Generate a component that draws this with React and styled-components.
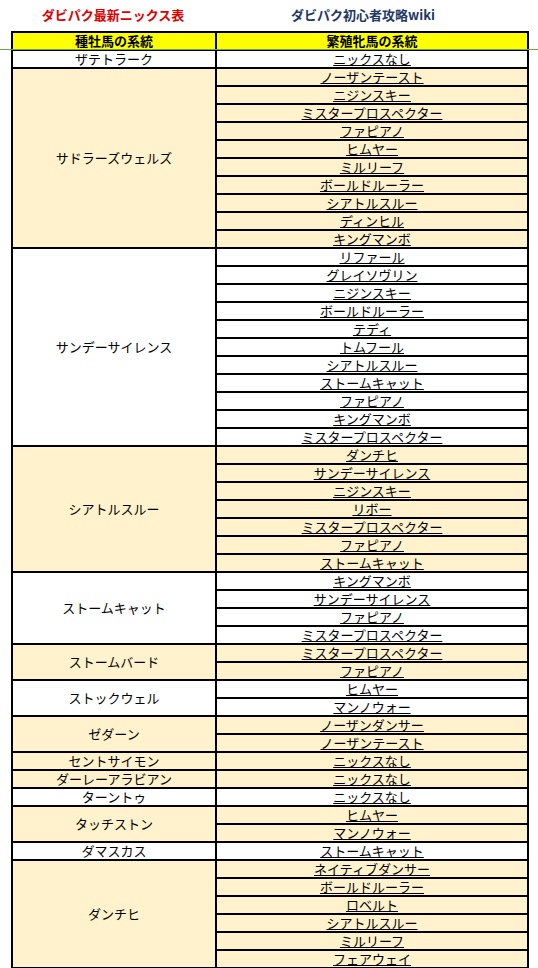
import React from "react";
import styled, { createGlobalStyle } from "styled-components";

const groups = [
  { sire: "ザテトラーク", cream: false, mares: ["ニックスなし"] },
  {
    sire: "サドラーズウェルズ",
    cream: true,
    mares: [
      "ノーザンテースト",
      "ニジンスキー",
      "ミスタープロスペクター",
      "ファピアノ",
      "ヒムヤー",
      "ミルリーフ",
      "ボールドルーラー",
      "シアトルスルー",
      "ディンヒル",
      "キングマンボ",
    ],
  },
  {
    sire: "サンデーサイレンス",
    cream: false,
    mares: [
      "リファール",
      "グレイソヴリン",
      "ニジンスキー",
      "ボールドルーラー",
      "テディ",
      "トムフール",
      "シアトルスルー",
      "ストームキャット",
      "ファピアノ",
      "キングマンボ",
      "ミスタープロスペクター",
    ],
  },
  {
    sire: "シアトルスルー",
    cream: true,
    mares: [
      "ダンチヒ",
      "サンデーサイレンス",
      "ニジンスキー",
      "リボー",
      "ミスタープロスペクター",
      "ファピアノ",
      "ストームキャット",
    ],
  },
  {
    sire: "ストームキャット",
    cream: false,
    mares: ["キングマンボ", "サンデーサイレンス", "ファピアノ", "ミスタープロスペクター"],
  },
  { sire: "ストームバード", cream: true, mares: ["ミスタープロスペクター", "ファピアノ"] },
  { sire: "ストックウェル", cream: false, mares: ["ヒムヤー", "マンノウォー"] },
  { sire: "ゼダーン", cream: true, mares: ["ノーザンダンサー", "ノーザンテースト"] },
  { sire: "セントサイモン", cream: true, mares: ["ニックスなし"] },
  { sire: "ダーレーアラビアン", cream: true, mares: ["ニックスなし"] },
  { sire: "ターントゥ", cream: false, mares: ["ニックスなし"] },
  { sire: "タッチストン", cream: true, mares: ["ヒムヤー", "マンノウォー"] },
  { sire: "ダマスカス", cream: false, mares: ["ストームキャット"] },
  {
    sire: "ダンチヒ",
    cream: true,
    mares: [
      "ネイティブダンサー",
      "ボールドルーラー",
      "ロベルト",
      "シアトルスルー",
      "ミルリーフ",
      "フェアウェイ",
    ],
  },
];

const App = () => {
  return (
    <Page>
      <GlobalStyle />
      <TitleBar>
        <Title color="#e00000">ダビパク最新ニックス表</Title>
        <Title color="#1f3864">ダビパク初心者攻略wiki</Title>
      </TitleBar>
      <Sheet>
        <colgroup>
          <col style={{ width: 204 }} />
          <col style={{ width: 312 }} />
        </colgroup>
        <thead>
          <tr>
            <HeadCell>種牡馬の系統</HeadCell>
            <HeadCell>繁殖牝馬の系統</HeadCell>
          </tr>
        </thead>
        <tbody>
          {groups.map((g) =>
            g.mares.map((m, i) => (
              <tr key={g.sire + i}>
                {i === 0 && (
                  <SireCell rowSpan={g.mares.length} cream={g.cream ? 1 : 0}>
                    {g.sire}
                  </SireCell>
                )}
                <MareCell cream={g.cream ? 1 : 0}>{m}</MareCell>
              </tr>
            ))
          )}
        </tbody>
      </Sheet>
      <FreezeLine />
    </Page>
  );
};

const GlobalStyle = createGlobalStyle`
  body {
    margin: 0;
    background: #fff;
    font-family: "Noto Sans CJK JP", "Noto Sans", sans-serif;
  }
`;

const Page = styled.div`
  position: relative;
  width: 538px;
  height: 968px;
  overflow: hidden;
`;

const TitleBar = styled.div`
  display: grid;
  grid-template-columns: 204px 296px;
  padding-left: 11px;
  height: 31px;
  align-items: center;
`;

const Title = styled.div`
  text-align: center;
  font-size: 13px;
  font-weight: 700;
  color: ${(p) => p.color};
  line-height: 1;
  padding-bottom: 2px;
`;

const Sheet = styled.table`
  margin-left: 11px;
  width: 516px;
  border-collapse: collapse;
  table-layout: fixed;
  border: 2px solid #000;
  font-size: 13px;
  color: #000;
`;

const cellBase = `
  border: 2px solid #000;
  padding: 0;
  height: 16px;
  line-height: 16px;
  text-align: center;
  white-space: nowrap;
  overflow: hidden;
`;

const HeadCell = styled.th`
  ${cellBase}
  background: #ffff00;
  font-weight: 700;
  vertical-align: bottom;
`;

const SireCell = styled.td`
  ${cellBase}
  background: ${(p) => (p.cream ? "#fff2cc" : "#fff")};
  vertical-align: middle;
`;

const MareCell = styled.td`
  ${cellBase}
  background: ${(p) => (p.cream ? "#fff2cc" : "#fff")};
  text-decoration: underline;
  text-underline-offset: 1px;
  vertical-align: bottom;
`;

const FreezeLine = styled.div`
  position: absolute;
  left: 0;
  right: 0;
  top: 49px;
  height: 1px;
  background: #70a050;
`;

export default App;
